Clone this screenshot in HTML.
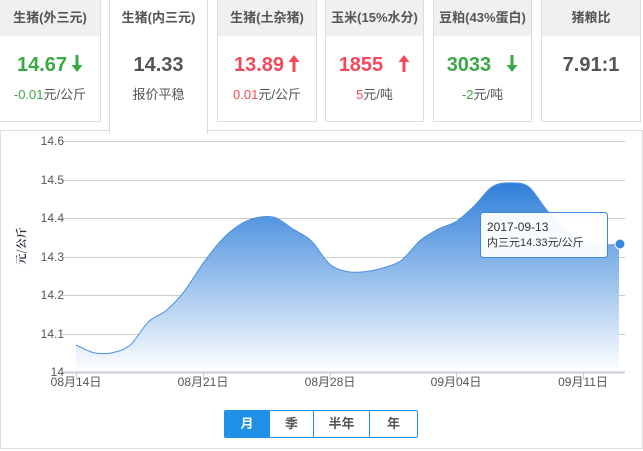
<!DOCTYPE html>
<html><head><meta charset="utf-8"><style>
*{margin:0;padding:0;box-sizing:border-box}
body{width:643px;height:451px;background:#fff;font-family:"Liberation Sans","Noto Sans CJK SC",sans-serif;position:relative;overflow:hidden}
.card{position:absolute;top:-1px;height:123px;border:1px solid #ddd;background:#fff;text-align:center}
.card .h{height:36px;background:#f0f0f0;font-size:13px;font-weight:bold;color:#555;line-height:36px}
.card .v{font-size:20px;font-weight:bold;margin-top:17px;line-height:24px}
.card .v svg{vertical-align:-1px;margin-left:4px}
.card .s{font-size:13px;color:#555;margin-top:7px}
.g{color:#3aa845}.r{color:#f5485a}.k{color:#555}
.panel{position:absolute;left:0;top:130px;width:643px;height:319px;border:1px solid #ddd}
.btns{position:absolute;left:224px;top:410px;height:28px;display:flex;border:1px solid #1e90e6;border-radius:2px}
.btns div{font-size:13px;font-weight:bold;color:#555;text-align:center;line-height:26px;border-left:1px solid #1e90e6}
</style></head><body>
<div class="panel"></div>
<div class="card" style="left:0;width:101px;border-left:none"><div class="h">生猪(外三元)</div><div class="v g">14.67<svg width="12" height="17" viewBox="0 0 12 17"><path d="M4.5 0h3v10h4L6 17 0.5 10h4z" fill="#3aa845"/></svg></div><div class="s"><span class="g">-0.01</span>元/公斤</div></div>
<div class="card" style="left:109px;width:99px;height:135px;border-bottom:none;z-index:2"><div class="h" style="background:#fff">生猪(内三元)</div><div class="v k">14.33</div><div class="s">报价平稳</div></div>
<div class="card" style="left:217px;width:100px"><div class="h">生猪(土杂猪)</div><div class="v r">13.89<svg width="12" height="17" viewBox="0 0 12 17"><path d="M4.5 17h3V7h4L6 0 0.5 7h4z" fill="#f5485a"/></svg></div><div class="s"><span class="r">0.01</span>元/公斤</div></div>
<div class="card" style="left:325px;width:99px"><div class="h">玉米(15%水分)</div><div class="v r">1855 &nbsp;<svg width="12" height="17" viewBox="0 0 12 17"><path d="M4.5 17h3V7h4L6 0 0.5 7h4z" fill="#f5485a"/></svg></div><div class="s"><span class="r">5</span>元/吨</div></div>
<div class="card" style="left:433px;width:99px"><div class="h">豆粕(43%蛋白)</div><div class="v g">3033 &nbsp;<svg width="12" height="17" viewBox="0 0 12 17"><path d="M4.5 0h3v10h4L6 17 0.5 10h4z" fill="#3aa845"/></svg></div><div class="s"><span class="g">-2</span>元/吨</div></div>
<div class="card" style="left:541px;width:100px"><div class="h">猪粮比</div><div class="v k">7.91:1</div></div>
<svg style="position:absolute;left:0;top:0" width="643" height="451">
<defs><linearGradient id="gr" x1="0" y1="0" x2="0" y2="1"><stop offset="0" stop-color="#2f7fd8"/><stop offset="1" stop-color="#fff"/></linearGradient></defs>
<g stroke="#ccc" stroke-width="1">
<line x1="62" y1="141.5" x2="625" y2="141.5"/><line x1="62" y1="180.5" x2="625" y2="180.5"/><line x1="62" y1="218.5" x2="625" y2="218.5"/><line x1="62" y1="257.5" x2="625" y2="257.5"/><line x1="62" y1="295.5" x2="625" y2="295.5"/><line x1="62" y1="334.5" x2="625" y2="334.5"/>
</g>
<path id="a" d="" fill="url(#gr)"/>
<line x1="62" y1="372.5" x2="625" y2="372.5" stroke="#c8ccd8" stroke-width="2"/>
<g stroke="#c8ccd8"><line x1="76.5" y1="372" x2="76.5" y2="380"/><line x1="203.5" y1="372" x2="203.5" y2="380"/><line x1="330.5" y1="372" x2="330.5" y2="380"/><line x1="456.5" y1="372" x2="456.5" y2="380"/><line x1="583.5" y1="372" x2="583.5" y2="380"/></g>
<path id="l" d="" fill="none" stroke="#4a8fe0" stroke-width="1"/>
<g font-size="12" fill="#555" text-anchor="end" font-family="Liberation Sans">
<text x="64" y="145">14.6</text><text x="64" y="184">14.5</text><text x="64" y="222">14.4</text><text x="64" y="261">14.3</text><text x="64" y="299">14.2</text><text x="64" y="338">14.1</text><text x="64" y="376">14</text></g>
<g font-size="12" fill="#555" text-anchor="middle"><text x="76" y="386">08月14日</text><text x="203" y="386">08月21日</text><text x="330" y="386">08月28日</text><text x="456" y="386">09月04日</text><text x="583" y="386">09月11日</text></g>
<text transform="translate(25,246) rotate(-90)" font-size="11" font-weight="bold" fill="#334" text-anchor="middle" font-family="Noto Serif CJK SC,serif">元/公斤</text>
<circle cx="620" cy="244" r="5" fill="#3a88dd" stroke="#fff" stroke-width="1"/>
<rect x="480.5" y="212.5" width="127" height="45" rx="3" fill="#fff" fill-opacity=".95" stroke="#3a88dd"/>
<text x="487" y="231" font-size="12" fill="#333">2017-09-13</text>
<text x="487" y="246" font-size="11" fill="#333">内三元14.33元/公斤</text>
</svg>
<div class="btns"><div style="width:44px;background:#1e90e6;color:#fff;border:none">月</div><div style="width:44px">季</div><div style="width:56px">半年</div><div style="width:48px">年</div></div>
<script>
var v=[14.07,14.05,14.05,14.07,14.13,14.16,14.21,14.28,14.34,14.38,14.40,14.40,14.37,14.34,14.28,14.26,14.26,14.27,14.29,14.34,14.37,14.39,14.43,14.48,14.49,14.48,14.42,14.37,14.34,14.33,14.33];
var P=v.map(function(x,i){return[76+i*18.1,372-(x-14)*386]});
var d="M"+P[0][0]+","+P[0][1];
for(var i=0;i<P.length-1;i++){var p0=P[i-1]||P[i],p1=P[i],p2=P[i+1],p3=P[i+2]||p2,t=0.16;
d+="C"+(p1[0]+(p2[0]-p0[0])*t).toFixed(1)+","+(p1[1]+(p2[1]-p0[1])*t).toFixed(1)+" "+(p2[0]-(p3[0]-p1[0])*t).toFixed(1)+","+(p2[1]-(p3[1]-p1[1])*t).toFixed(1)+" "+p2[0].toFixed(1)+","+p2[1].toFixed(1);}
document.getElementById("l").setAttribute("d",d);
document.getElementById("a").setAttribute("d",d+"L619,372L76,372Z");
</script>
</body></html>
